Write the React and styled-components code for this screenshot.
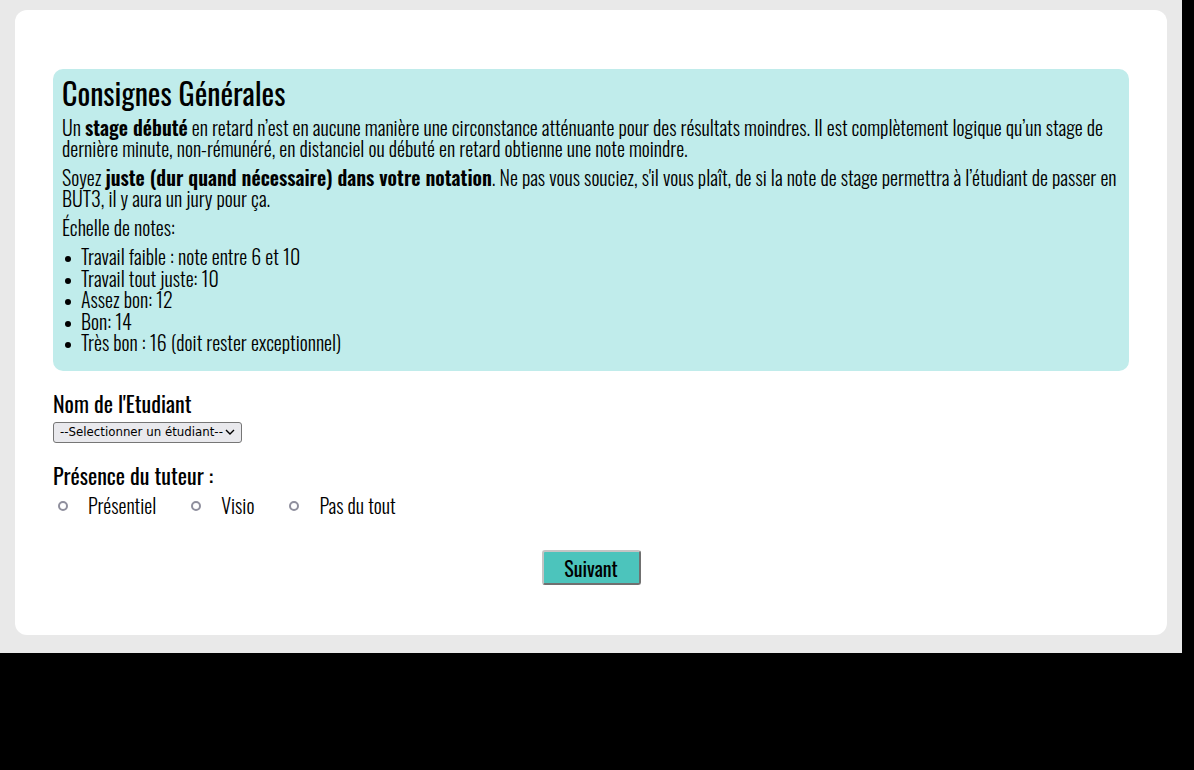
import React, { useState } from 'react'
import styled, { createGlobalStyle } from "styled-components";

const GlobalStyle = createGlobalStyle`
  html {
    background: #000;
  }
  body {
    margin: 0;
    width: 1182px;
    height: 653px;
    box-sizing: border-box;
    padding: 10px 15px;
    background: #e9e9e9;
    font-family: "Oswald", "Open Sans", sans-serif;
    font-weight: 300;
    color: #000;
  }
`;

const notes = [
  "Travail faible : note entre 6 et 10",
  "Travail tout juste: 10",
  "Assez bon: 12",
  "Bon: 14",
  "Très bon : 16 (doit rester exceptionnel)",
];

const presences = ["Présentiel", "Visio", "Pas du tout"];

const chevron =
  "data:image/svg+xml;utf8,<svg xmlns='http://www.w3.org/2000/svg' width='10' height='6' viewBox='0 0 10 6'><path d='M1 1l4 4 4-4' fill='none' stroke='%23000' stroke-width='1.4'/></svg>";

function App() {
  const [etudiant, setEtudiant] = useState("");
  const [presence, setPresence] = useState("");

  return (
    <>
      <GlobalStyle />
      <Card>
        <Consignes>
          <Titre>Consignes Générales</Titre>
          <Paragraphe>
            Un <b>stage débuté</b> en retard n’est en aucune manière une circonstance atténuante pour des résultats moindres. Il est complètement logique qu’un stage de dernière minute, non-rémunéré, en distanciel ou débuté en retard obtienne une note moindre.
          </Paragraphe>
          <Paragraphe>
            Soyez <b>juste (dur quand nécessaire) dans votre notation</b>. Ne pas vous souciez, s'il vous plaît, de si la note de stage permettra à l’étudiant de passer en BUT3, il y aura un jury pour ça.
          </Paragraphe>
          <Paragraphe>Échelle de notes:</Paragraphe>
          <Liste>
            {notes.map((n) => (
              <li key={n}>{n}</li>
            ))}
          </Liste>
        </Consignes>

        <Label htmlFor="etudiant" $top={18}>Nom de l'Etudiant</Label>
        <Select id="etudiant" value={etudiant} onChange={(e) => setEtudiant(e.target.value)}>
          <option value="">--Selectionner un étudiant--</option>
        </Select>

        <Label as="div" $top={18}>Présence du tuteur :</Label>
        <Radios>
          {presences.map((p) => (
            <RadioLabel key={p}>
              <Radio
                type="radio"
                name="presence"
                value={p}
                checked={presence === p}
                onChange={() => setPresence(p)}
              />
              {p}
            </RadioLabel>
          ))}
        </Radios>

        <Actions>
          <Bouton type="button">Suivant</Bouton>
        </Actions>
      </Card>
    </>
  );
}

const Card = styled.div`
  background: #fff;
  border-radius: 12px;
  padding: 59px 38px 50px;
`;

const Consignes = styled.div`
  background: #c0eceb;
  border-radius: 10px;
  padding: 6px 9px 17px;
`;

const Titre = styled.h2`
  margin: 0 0 6px;
  font-size: 30px;
  font-weight: 400;
  line-height: 36px;
`;

const Paragraphe = styled.p`
  margin: 0 0 8px;
  font-size: 20px;
  line-height: 21px;

  b {
    font-weight: 600;
  }
`;

const Liste = styled.ul`
  margin: 1px 0 0;
  padding-left: 19px;
  list-style: none;
  font-size: 20px;
  line-height: 21.5px;

  li::before {
    content: "";
    display: inline-block;
    width: 6px;
    height: 6px;
    margin: 0 10px 0 -16px;
    border-radius: 50%;
    background: #000;
    vertical-align: middle;
  }
`;

const Label = styled.label`
  display: block;
  margin-top: ${(p) => p.$top}px;
  font-size: 22px;
  font-weight: 400;
  line-height: 28px;
`;

const Select = styled.select`
  display: block;
  margin-top: 5px;
  appearance: none;
  font-family: "DejaVu Sans", sans-serif;
  font-size: 11.8px;
  font-weight: 400;
  height: 21px;
  width: 189px;
  padding: 0 18px 0 6px;
  border: 1px solid #767676;
  border-radius: 3px;
  background: #e9e9ed url("${chevron}") no-repeat right 6px center;
  color: #000;
`;

const Radios = styled.div`
  display: flex;
  gap: 30px;
  margin-top: 2px;
`;

const RadioLabel = styled.label`
  display: flex;
  align-items: center;
  gap: 20px;
  font-size: 20px;
  line-height: 28px;
`;

const Radio = styled.input`
  appearance: none;
  margin: 2px 0 0 5px;
  width: 10px;
  height: 10px;
  border: 2px solid #8f8f9d;
  border-radius: 50%;
  box-sizing: border-box;
  background: #fff;

  &:checked {
    background: #4cc4bc;
  }
`;

const Actions = styled.div`
  display: flex;
  justify-content: center;
  margin-top: 31px;
`;

const Bouton = styled.button`
  width: 99px;
  height: 35px;
  background: #4cc4bc;
  border: 2px outset #c4c4c4;
  border-radius: 3px;
  font-family: inherit;
  font-size: 20px;
  font-weight: 400;
  color: #000;
  cursor: pointer;
`;

export default App;
